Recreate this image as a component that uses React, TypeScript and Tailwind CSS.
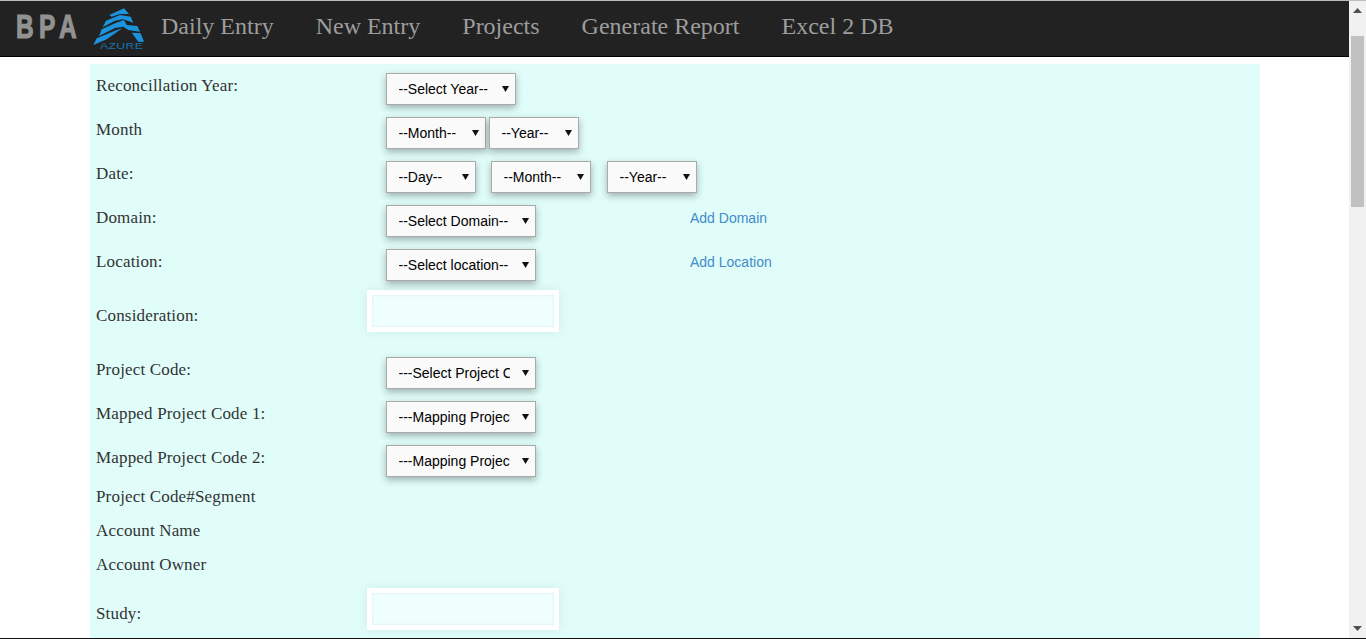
const labelCls = "text-[17px] leading-[22px] tracking-[0.17px] text-[#333] font-['Liberation_Serif',serif]";

function Select({ text, width }: { text: string; width: string }) {
  return (
    <div className={`relative h-8 shrink-0 ${width}`}>
      <select
        defaultValue={text}
        className="h-8 w-full appearance-none border border-[#aaa] bg-[#fafafa] pl-[11.5px] pr-[25px] font-['Liberation_Sans',sans-serif] text-sm text-black shadow-[0_3px_7px_rgba(0,0,0,0.3)] outline-none"
      >
        <option>{text}</option>
      </select>
      <svg className="pointer-events-none absolute right-[7px] top-[13px]" width="7" height="6" viewBox="0 0 7 6">
        <path d="M0 0h7L3.5 6z" fill="#111" />
      </svg>
    </div>
  );
}

function SelectRow({ label, children, link }: { label: string; children: React.ReactNode; link?: string }) {
  return (
    <div className="flex h-8 mb-3 items-start">
      <div className={`w-[290px] shrink-0 pt-[2px] ${labelCls}`}>{label}</div>
      <div className="flex w-[304px] shrink-0">{children}</div>
      {link && (
        <a href="#" className="-mt-[3px] font-['Liberation_Sans',sans-serif] text-sm leading-8 text-[#428bca]">
          {link}
        </a>
      )}
    </div>
  );
}

function TextRow({ label }: { label: string }) {
  return <div className={`h-[34px] ${labelCls}`}>{label}</div>;
}

function InputRow({ label }: { label: string }) {
  return (
    <div className="flex items-center">
      <div className={`w-[271px] shrink-0 pt-[10px] ${labelCls}`}>{label}</div>
      <input
        type="text"
        className="h-[42px] w-[192px] border-[5px] border-white bg-[#eefffd] shadow-[0_0_10px_rgba(0,0,0,0.08),inset_0_0_3px_rgba(0,0,0,0.1)] outline-none"
      />
    </div>
  );
}

function Logo() {
  return (
    <div className="relative ml-[15px] mt-px h-[42px] w-[54px] shrink-0">
      <svg width="54" height="42" viewBox="0 0 54 42" className="absolute left-0 top-0">
        <path d="M17.3 7 32 .3 37 6H28L19.7 8.7z" fill="#1b93dd" />
        <path d="M14 12.7 28 7 38.7 8.7 41.3 14.7 31.3 11.3 23 12.7 10.7 19.3z" fill="#1b93dd" />
        <path d="M9.7 21.3 23 15.3 32 12 34.7 17 45.3 18 48 23.7 36.3 22 31.3 18.7 23 20 7 28z" fill="#1b93dd" />
        <path d="M4.7 30.3 23 22.7 30.7 20 14.7 31.3 1.3 37z" fill="#1b93dd" />
        <path d="M39.7 24.7 48.7 25.3 52 33.7H46.3z" fill="#1b93dd" />
      </svg>
      <span className="absolute left-[8px] top-[35px] origin-left scale-x-[1.35] font-['Liberation_Sans',sans-serif] text-[9px] leading-[7px] tracking-[0.3px] text-[#1673ad]">
        AZURE
      </span>
    </div>
  );
}

const navItems = ["Daily Entry", "New Entry", "Projects", "Generate Report", "Excel 2 DB"];

export default function App() {
  return (
    <div className="flex h-[639px] w-[1366px] flex-col overflow-hidden border-b border-[#111] bg-white">
      <div className="flex min-h-0 flex-1">
        <div className="flex min-w-0 flex-1 flex-col">
          <header className="box-content flex h-[55px] shrink-0 items-center border-t border-b border-t-[#bbb] border-b-black bg-[#222]">
            <div className="ml-[16px] mb-[4px] w-[61px] shrink-0">
              <span className="inline-block origin-left scale-x-[0.72] font-['Liberation_Sans',sans-serif] text-[34px] font-bold leading-none tracking-[7.5px] text-[#929292] [-webkit-text-stroke:1.2px_#929292]">
                BPA
              </span>
            </div>
            <Logo />
            <nav className="ml-[15px] mb-[6px] flex gap-[42px] font-['Liberation_Serif',serif] text-[24px] leading-none text-[#9d9d9d]">
              {navItems.map((item) => (
                <a key={item} href="#">
                  {item}
                </a>
              ))}
            </nav>
          </header>

          <main className="mx-[90px] mt-[7px] w-[1170px] flex-1 bg-[#e0fdfa] pl-[6px] pt-[9px]">
            <SelectRow label="Reconcillation Year:">
              <Select text="--Select Year--" width="w-[130px]" />
            </SelectRow>
            <SelectRow label="Month">
              <div className="flex gap-[3px]">
                <Select text="--Month--" width="w-[100px]" />
                <Select text="--Year--" width="w-[90px]" />
              </div>
            </SelectRow>
            <SelectRow label="Date:">
              <div className="flex">
                <Select text="--Day--" width="w-[90px]" />
                <div className="ml-[15px]">
                  <Select text="--Month--" width="w-[100px]" />
                </div>
                <div className="ml-[16px]">
                  <Select text="--Year--" width="w-[90px]" />
                </div>
              </div>
            </SelectRow>
            <SelectRow label="Domain:" link="Add Domain">
              <Select text="--Select Domain--" width="w-[150px]" />
            </SelectRow>
            <SelectRow label="Location:" link="Add Location">
              <Select text="--Select location--" width="w-[150px]" />
            </SelectRow>
            <div className="-mt-[3px] mb-[25px]">
              <InputRow label="Consideration:" />
            </div>
            <SelectRow label="Project Code:">
              <Select text="---Select Project Code---" width="w-[150px]" />
            </SelectRow>
            <SelectRow label="Mapped Project Code 1:">
              <Select text="---Mapping Project Code---" width="w-[150px]" />
            </SelectRow>
            <SelectRow label="Mapped Project Code 2:">
              <Select text="---Mapping Project Code---" width="w-[150px]" />
            </SelectRow>
            <div className="-mt-[3px]">
              <TextRow label="Project Code#Segment" />
              <TextRow label="Account Name" />
              <TextRow label="Account Owner" />
            </div>
            <InputRow label="Study:" />
          </main>
        </div>

        <aside className="flex w-[17px] shrink-0 flex-col items-center border-t border-t-[#bbb] bg-[#f1f1f1]">
          <svg className="mt-[7px] shrink-0" width="9" height="5" viewBox="0 0 9 5">
            <path d="M4.5 0 9 5H0z" fill="#505050" />
          </svg>
          <div className="mt-[23px] h-[171px] w-[13px] shrink-0 bg-[#c1c1c1]" />
          <svg className="mt-auto mb-[7px] shrink-0" width="9" height="5" viewBox="0 0 9 5">
            <path d="M0 0h9L4.5 5z" fill="#505050" />
          </svg>
        </aside>
      </div>
    </div>
  );
}
